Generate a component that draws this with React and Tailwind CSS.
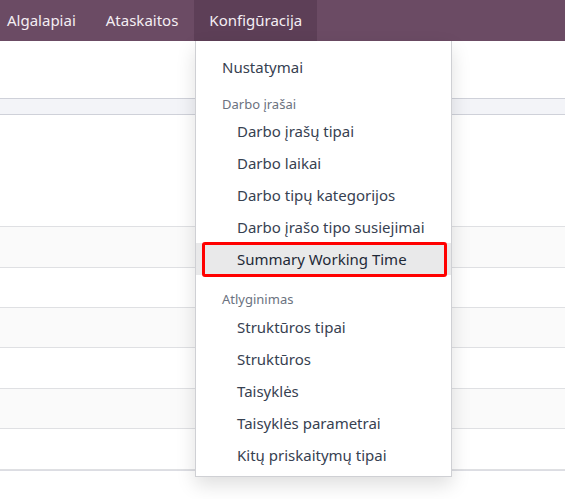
const menu = [
  { type: 'top', label: 'Nustatymai' },
  { type: 'header', label: 'Darbo įrašai', first: true },
  { type: 'item', label: 'Darbo įrašų tipai' },
  { type: 'item', label: 'Darbo laikai' },
  { type: 'item', label: 'Darbo tipų kategorijos' },
  { type: 'item', label: 'Darbo įrašo tipo susiejimai' },
  { type: 'item', label: 'Summary Working Time', active: true },
  { type: 'header', label: 'Atlyginimas' },
  { type: 'item', label: 'Struktūros tipai' },
  { type: 'item', label: 'Struktūros' },
  { type: 'item', label: 'Taisyklės' },
  { type: 'item', label: 'Taisyklės parametrai' },
  { type: 'item', label: 'Kitų priskaitymų tipai' },
];

// body rows under the list header
const rows = [
  { h: 'h-[112px]', bg: 'bg-white' },
  { h: 'h-[41px]', bg: 'bg-[#fafafa]' },
  { h: 'h-[40px]', bg: 'bg-white' },
  { h: 'h-[40px]', bg: 'bg-[#fafafa]' },
  { h: 'h-[41px]', bg: 'bg-white' },
  { h: 'h-[40px]', bg: 'bg-[#fafafa]' },
  { h: 'h-[41px]', bg: 'bg-white' },
];

function MenuRow({ entry }) {
  if (entry.type === 'top') {
    return (
      <div className="h-[32px] leading-[32px] pl-[26px] text-[15px] text-[#374151]">
        {entry.label}
      </div>
    );
  }
  if (entry.type === 'header') {
    return (
      <div
        className={
          entry.first
            ? 'pt-[10px] leading-[22px] pl-[26px] text-[13px] text-[#6b7280]'
            : 'pt-[12px] leading-[24px] pl-[26px] text-[13px] text-[#6b7280]'
        }
      >
        {entry.label}
      </div>
    );
  }
  if (entry.active) {
    return (
      <div className="relative h-[32px] leading-[32px] pl-[41px] text-[15px] text-[#1f2937] bg-[#e9e9ea]">
        {entry.label}
        <div className="absolute left-[6px] right-[4px] top-[-1px] bottom-[-2px] border-[3px] border-[#ff0000] rounded-[3px]" />
      </div>
    );
  }
  return (
    <div className="h-[32px] leading-[32px] pl-[41px] text-[15px] text-[#374151]">
      {entry.label}
    </div>
  );
}

export default function App() {
  return (
    <div
      className="relative w-[565px] h-[499px] overflow-hidden bg-white"
      style={{ fontFamily: '"Noto Sans", "Open Sans", sans-serif' }}
    >
      {/* Top navbar */}
      <div className="h-[41px] bg-[#6b4b64] flex items-stretch text-[15px] text-[#f4eef3]">
        <div className="flex items-center pl-[7px] pr-[15px]">Algalapiai</div>
        <div className="flex items-center px-[15px]">Ataskaitos</div>
        <div className="flex items-center ml-[1px] px-[15px] bg-[#5d3f57]">Konfigūracija</div>
      </div>

      {/* Control panel area */}
      <div className="h-[57px] bg-white" />

      {/* List header */}
      <div className="h-[17px] bg-[#f3f4f8] border-y border-[#cfd1d9]" />

      {/* List rows */}
      {rows.map((r, i) => (
        <div key={i} className={`${r.h} ${r.bg} border-b border-[#dfe0e3]`} />
      ))}
      <div className="h-[1px] bg-[#dcdde3]" />

      {/* Dropdown menu */}
      <div className="absolute left-[195px] top-[41px] w-[257px] h-[436px] bg-white border-x border-b border-[#cfd0d4] shadow-[0_8px_18px_rgba(0,0,0,0.13)] pt-[10px]">
        {menu.map((entry, i) => (
          <MenuRow key={i} entry={entry} />
        ))}
      </div>
    </div>
  );
}
